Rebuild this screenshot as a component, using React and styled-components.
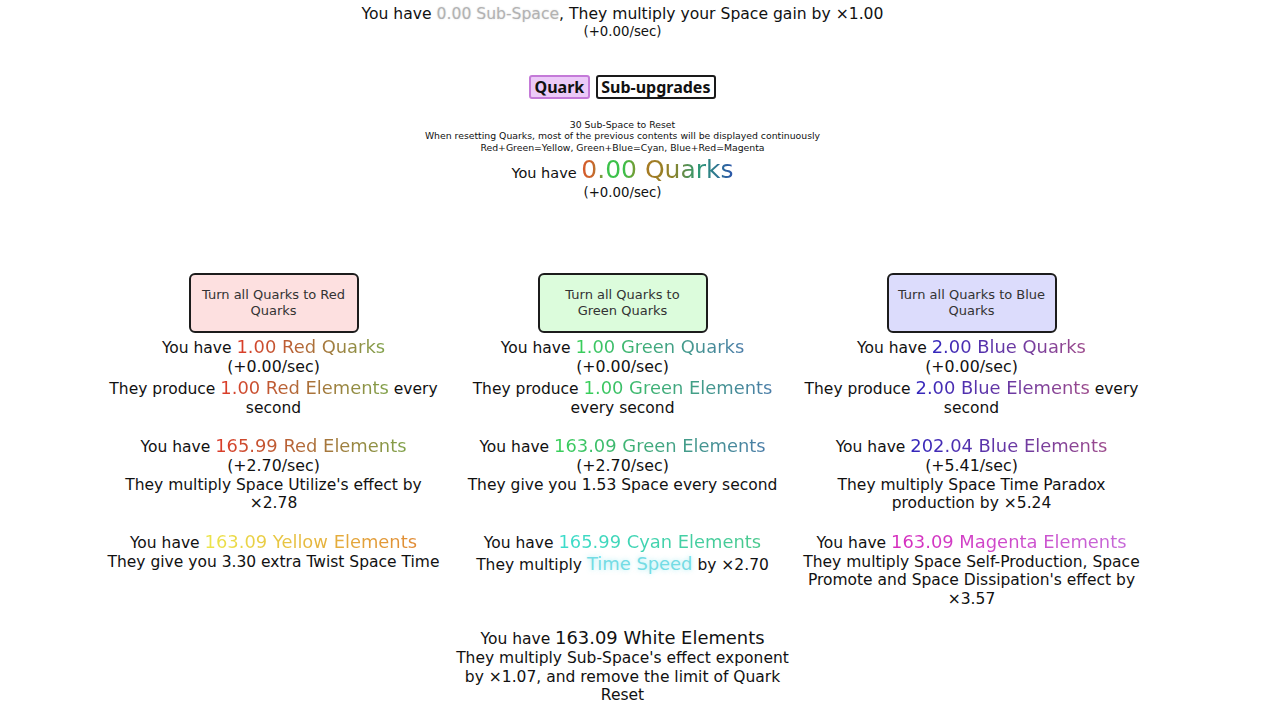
import { styled, createGlobalStyle } from "styled-components";

const GlobalStyle = createGlobalStyle`
  html, body {
    margin: 0;
    padding: 0;
    background: #ffffff;
  }
  body {
    font-family: "DejaVu Sans", Verdana, sans-serif;
    color: #111111;
  }
`;

const quarkColumns = [
  {
    key: "red",
    button: "Turn all Quarks to Red Quarks",
    buttonBg: "#fde0e0",
    width: 342,
    from: "#dc3a28",
    to: "#80a24a",
    quarks: "1.00 Red Quarks",
    produce: "1.00 Red Elements",
    elements: "165.99 Red Elements",
    rate: "(+2.70/sec)",
    effect: "They multiply Space Utilize's effect by ×2.78",
  },
  {
    key: "green",
    button: "Turn all Quarks to Green Quarks",
    buttonBg: "#dcfcdc",
    width: 330,
    from: "#38d058",
    to: "#4a7ca8",
    quarks: "1.00 Green Quarks",
    produce: "1.00 Green Elements",
    elements: "163.09 Green Elements",
    rate: "(+2.70/sec)",
    effect: "They give you 1.53 Space every second",
  },
  {
    key: "blue",
    button: "Turn all Quarks to Blue Quarks",
    buttonBg: "#dcdcfc",
    width: 348,
    from: "#3326bc",
    to: "#9c4a8c",
    quarks: "2.00 Blue Quarks",
    produce: "2.00 Blue Elements",
    elements: "202.04 Blue Elements",
    rate: "(+5.41/sec)",
    effect: "They multiply Space Time Paradox production by ×5.24",
  },
];

function App() {
  return (
    <Page>
      <GlobalStyle />
      <Header>
        <HeadLine>
          You have <SubSpace>0.00 Sub-Space</SubSpace>, They multiply your
          Space gain by ×1.00
        </HeadLine>
        <SmallRate>(+0.00/sec)</SmallRate>
      </Header>

      <Tabs>
        <Tab $active>Quark</Tab>
        <Tab>Sub-upgrades</Tab>
      </Tabs>

      <Notes>
        <div>30 Sub-Space to Reset</div>
        <div>
          When resetting Quarks, most of the previous contents will be
          displayed continuously
        </div>
        <div>Red+Green=Yellow, Green+Blue=Cyan, Blue+Red=Magenta</div>
      </Notes>

      <QuarkTotal>
        You have <BigQuarks>0.00 Quarks</BigQuarks>
      </QuarkTotal>
      <QuarkRate>(+0.00/sec)</QuarkRate>

      <ButtonRow>
        {quarkColumns.map((col) => (
          <ButtonCell key={col.key}>
            <ConvertButton $bg={col.buttonBg}>{col.button}</ConvertButton>
          </ButtonCell>
        ))}
      </ButtonRow>

      <TextGrid>
        {quarkColumns.map((col) => (
          <Cell key={col.key + "-q"} $width={col.width}>
            You have <Tint $from={col.from} $to={col.to}>{col.quarks}</Tint>
            <br />
            <Rate>(+0.00/sec)</Rate>
            <br />
            They produce{" "}
            <Tint $from={col.from} $to={col.to}>{col.produce}</Tint> every
            second
          </Cell>
        ))}

        {quarkColumns.map((col) => (
          <Cell key={col.key + "-e"} $width={col.width}>
            You have <Tint $from={col.from} $to={col.to}>{col.elements}</Tint>
            <br />
            <Rate>{col.rate}</Rate>
            <br />
            {col.effect}
          </Cell>
        ))}

        <Cell $width={342}>
          You have{" "}
          <Tint $from="#ece64a" $to="#e08a34">
            163.09 Yellow Elements
          </Tint>
          <br />
          They give you 3.30 extra Twist Space Time
        </Cell>
        <Cell $width={330}>
          You have{" "}
          <Tint $from="#3cdccc" $to="#48c88c">
            165.99 Cyan Elements
          </Tint>
          <br />
          They multiply <Glow>Time Speed</Glow> by ×2.70
        </Cell>
        <Cell $width={348}>
          You have{" "}
          <Tint $from="#d62cbe" $to="#c66ad8">
            163.09 Magenta Elements
          </Tint>
          <br />
          They multiply Space Self-Production, Space Promote and Space
          Dissipation's effect by ×3.57
        </Cell>
      </TextGrid>

      <WhiteBlock>
        <Cell $width={345}>
          You have <Big>163.09 White Elements</Big>
          <br />
          They multiply Sub-Space's effect exponent by ×1.07, and remove the
          limit of Quark Reset
        </Cell>
      </WhiteBlock>
    </Page>
  );
}

const Page = styled.div`
  width: 1245px;
  text-align: center;
  padding-top: 6px;
`;

const Header = styled.div`
  display: flex;
  flex-direction: column;
  align-items: center;
`;

const HeadLine = styled.div`
  font-size: 15.6px;
  line-height: 17px;
`;

const SubSpace = styled.span`
  color: #b2b2b2;
  text-shadow: 0 0 2px #d8d8d8;
`;

const SmallRate = styled.div`
  font-size: 13.3px;
  line-height: 18px;
`;

const Tabs = styled.div`
  display: flex;
  justify-content: center;
  align-items: flex-start;
  gap: 6px;
  margin-top: 34px;
`;

const Tab = styled.button`
  font-family: "Noto Sans", "Open Sans", sans-serif;
  font-weight: 700;
  font-size: 16px;
  line-height: 18px;
  height: 24px;
  padding: 1px 3.5px;
  color: #111;
  background: ${(p) => (p.$active ? "#eccaf8" : "#ffffff")};
  border: 2px solid ${(p) => (p.$active ? "#c47ad8" : "#1a1a1a")};
  border-radius: 3px;
  cursor: pointer;
`;

const Notes = styled.div`
  margin-top: 19.5px;
  font-size: 9.3px;
  line-height: 11.5px;
`;

const QuarkTotal = styled.div`
  margin-top: 5px;
  font-size: 14.5px;
  line-height: 24px;
`;

const BigQuarks = styled.span`
  font-size: 25px;
  background: linear-gradient(
    90deg,
    #d8582a 0%,
    #c8682c 8%,
    #3cc24a 17%,
    #3cc04a 28%,
    #a87a22 42%,
    #8e8228 60%,
    #2e9a72 76%,
    #2c54ac 100%
  );
  -webkit-background-clip: text;
  background-clip: text;
  color: transparent;
`;

const QuarkRate = styled.div`
  font-size: 13.3px;
  line-height: 16px;
`;

const ButtonRow = styled.div`
  display: grid;
  grid-template-columns: repeat(3, 349px);
  justify-content: center;
  margin-top: 72px;
`;

const ButtonCell = styled.div`
  display: flex;
  justify-content: center;
`;

const ConvertButton = styled.button`
  box-sizing: border-box;
  width: 170px;
  height: 60px;
  padding: 0 8px;
  font-family: "DejaVu Sans", Verdana, sans-serif;
  font-size: 13px;
  line-height: 16px;
  color: #333;
  background: ${(p) => p.$bg};
  border: 2px solid #1c1c1c;
  border-radius: 6px;
  cursor: pointer;
`;

const TextGrid = styled.div`
  display: grid;
  grid-template-columns: repeat(3, 349px);
  justify-content: center;
  justify-items: center;
  align-items: start;
  row-gap: 18px;
  margin-top: 3px;
`;

const Cell = styled.div`
  width: ${(p) => p.$width}px;
  font-size: 15.5px;
  line-height: 18.5px;
`;

const Rate = styled.span`
  font-size: 15.8px;
`;

const Big = styled.span`
  font-size: 17.9px;
  line-height: 22px;
`;

const Tint = styled(Big)`
  background: linear-gradient(90deg, ${(p) => p.$from}, ${(p) => p.$to});
  -webkit-background-clip: text;
  background-clip: text;
  color: transparent;
`;

const Glow = styled(Big)`
  color: #74dce4;
  text-shadow: 0 0 5px rgba(130, 228, 238, 0.7);
`;

const WhiteBlock = styled.div`
  display: flex;
  justify-content: center;
  margin-top: 19px;
`;

export default App;
